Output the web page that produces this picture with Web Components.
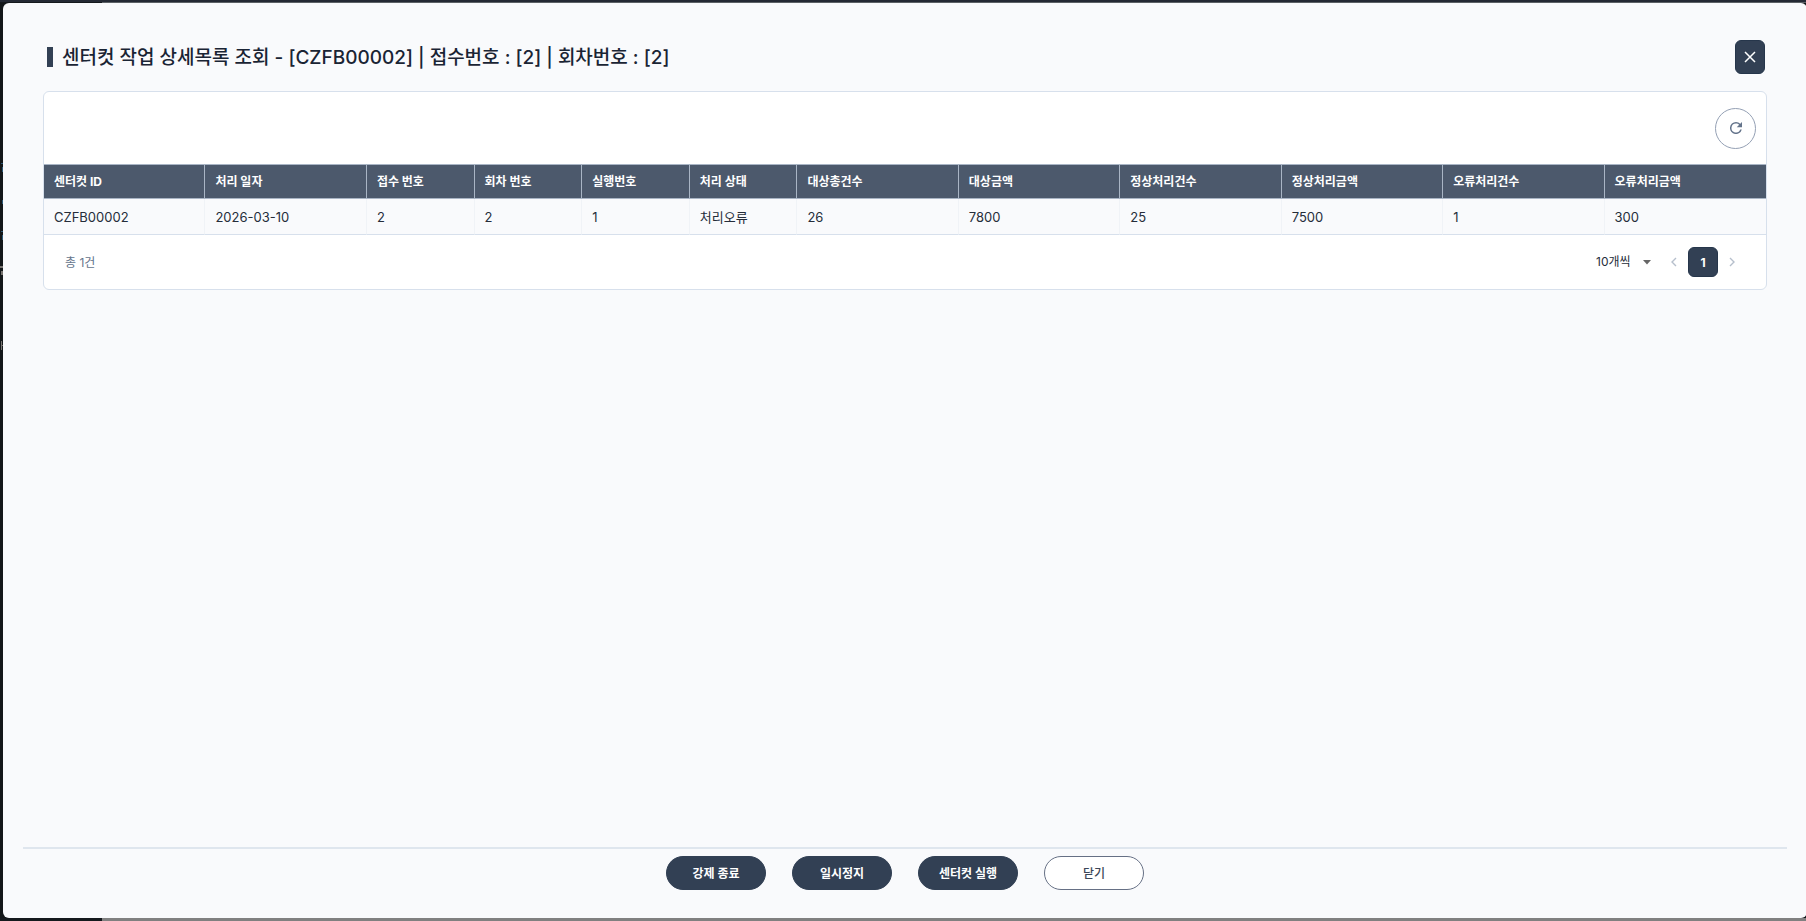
<!DOCTYPE html>
<html lang="ko">
<head>
<meta charset="utf-8">
<title>센터컷 작업 상세목록 조회</title>
<style>
html,body{height:100%;margin:0}
body{overflow:hidden;font-family:Inter,"Noto Sans CJK KR",sans-serif;font-size:12px;color:#1f2937;
  --navy:#324054;--line:#d7e0ec;--surface:#f9fafc}
</style>
</head>
<body>
<job-dialog></job-dialog>
<script>
const define=(name,html,setup)=>customElements.define(name,class extends HTMLElement{
  constructor(){super();const t=document.createElement('template');t.innerHTML=html;
    this.attachShadow({mode:'open'}).append(t.content.cloneNode(true));if(setup)setup(this,this.shadowRoot);}
});

define('pill-button',`<style>
:host{display:block}
button{box-sizing:border-box;width:100px;height:34px;padding:0 0 2px;border:1px solid var(--navy);border-radius:17px;background:var(--navy);color:#fff;font:inherit;font-size:12px;font-weight:700}
:host([outline]) button{background:#fff;border-color:#667085;color:#3a4658;font-weight:500}
</style><button type="button"><slot></slot></button>`);

define('icon-button',`<style>
:host{display:block}
button{display:flex;align-items:center;justify-content:center;box-sizing:border-box;padding:0;font:inherit}
:host([kind=close]) button{width:30px;height:34px;border:1px solid #26364b;border-radius:6px;background:var(--navy);color:#fff}
:host([kind=refresh]) button{width:41px;height:41px;border:1px solid #94a0b4;border-radius:50%;background:#fff;color:#64748b}
:host([kind=step]) button{width:20px;height:30px;border:0;background:none;color:#b6bfcc}
</style><button type="button"><slot></slot></button>`,(host,root)=>{
  root.querySelector('button').setAttribute('aria-label',({close:'닫기',refresh:'새로고침'})[host.getAttribute('kind')]||'페이지 이동');
});

define('job-title',`<style>
:host{display:flex;align-items:center;justify-content:space-between;height:34px;padding:0 2px 0 4px}
h1{display:flex;align-items:center;gap:9px;margin:0;font-size:19px;line-height:28px;font-weight:500;color:#1a2434}
h1::before{content:"";width:6px;height:20px;background:var(--navy)}
.text{padding-top:2px}
</style><h1><span class="text"><slot></slot></span></h1><slot name="action"></slot>`);

define('job-table',`<style>
:host{display:block}
table{width:100%;table-layout:fixed;border-collapse:separate;border-spacing:0}
col.s{width:6.25%}col.l{width:9.375%}
th,td{box-sizing:border-box;text-align:left;white-space:nowrap}
th{height:35px;padding:0 10px 2px;background:#4c596c;color:#fff;font-weight:700;border:solid #a9b5c5;border-width:1px 1px 1px 0}
td{height:36px;padding:0 10px;background:var(--surface);border-right:1px solid #f0f3f7;border-bottom:1px solid var(--line);color:#252d3a;font-size:13px}
th:last-child,td:last-child{border-right-width:0}
</style>
<table><colgroup><col class="l"><col class="l"><col class="s"><col class="s"><col class="s"><col class="s"><col class="l"><col class="l"><col class="l"><col class="l"><col class="l"><col class="l"></colgroup>
<thead><tr><th>센터컷 ID</th><th>처리 일자</th><th>접수 번호</th><th>회차 번호</th><th>실행번호</th><th>처리 상태</th><th>대상총건수</th><th>대상금액</th><th>정상처리건수</th><th>정상처리금액</th><th>오류처리건수</th><th>오류처리금액</th></tr></thead>
<tbody><tr><td>CZFB00002</td><td>2026-03-10</td><td>2</td><td>2</td><td>1</td><td>처리오류</td><td>26</td><td>7800</td><td>25</td><td>7500</td><td>1</td><td>300</td></tr></tbody></table>`);

define('job-pager',`<style>
:host{display:flex;align-items:center;justify-content:space-between;height:54px;padding:0 24px 0 21px}
.total{color:#64748b;padding-bottom:2px}
nav,label{display:flex;align-items:center}
label{position:relative;margin-right:12px}
select{appearance:none;border:0;background:none;width:56px;height:30px;padding:0 0 1px;font:inherit;font-size:12px;color:#252d3a}
label svg{position:absolute;right:0;pointer-events:none}
.page{width:30px;height:30px;margin:0 4px;padding:0;border:1px solid #26364b;border-radius:6px;background:var(--navy);color:#fff;font:inherit;font-weight:700}
</style>
<span class="total">총 1건</span>
<nav aria-label="페이지">
<label><select aria-label="페이지당 건수"><option>10개씩</option><option>20개씩</option></select><svg width="10" height="5" viewBox="0 0 10 5"><path d="M1 0h8L5 4.5z" fill="#666"/></svg></label>
<icon-button kind="step"><svg width="6" height="10" viewBox="0 0 6 10"><path d="M5 1 1 5l4 4" fill="none" stroke="currentColor" stroke-width="1.4"/></svg></icon-button>
<button class="page" type="button">1</button>
<icon-button kind="step"><svg width="6" height="10" viewBox="0 0 6 10"><path d="m1 1 4 4-4 4" fill="none" stroke="currentColor" stroke-width="1.4"/></svg></icon-button>
</nav>`);

define('job-card',`<style>
:host{display:block;border:1px solid var(--line);border-radius:6px;background:#fff;overflow:hidden}
.tools{display:flex;align-items:center;justify-content:flex-end;height:72px;padding-right:10px}
</style><div class="tools"><icon-button kind="refresh"><svg width="12" height="12" viewBox="4 4 16 16"><path fill="currentColor" d="M17.65 6.35A7.96 7.96 0 0 0 12 4a8 8 0 1 0 7.73 10h-2.08A6 6 0 1 1 12 6c1.66 0 3.14.69 4.22 1.78L13 11h7V4z"/></svg></icon-button></div><slot></slot>`);

define('job-dialog',`<style>
:host{display:flex;box-sizing:border-box;height:100%;margin-right:-1px;padding:3px 0 3px 3px;
  --blue:linear-gradient(#2c5876,#2c5876);--grey:linear-gradient(#77736f,#77736f);
  background:var(--blue) 1px 163px/2px 1px no-repeat,var(--blue) 2px 167px/1px 5px no-repeat,
    var(--blue) 2px 200px/1px 4px no-repeat,
    var(--blue) 1px 231px/2px 1px no-repeat,var(--blue) 2px 235px/1px 5px no-repeat,
    var(--grey) 0 266px/3px 2px no-repeat,var(--grey) 1px 271px/2px 4px no-repeat,
    var(--grey) 1px 341px/1px 9px no-repeat,var(--grey) 1px 345px/2px 1px no-repeat,
    linear-gradient(#15191d,#15191d) 0 100%/102px 3px no-repeat,
    linear-gradient(#808080,#808080) 0 100%/100% 3px no-repeat,
    linear-gradient(#15191d,#15191d) 0 2px/102px 1px no-repeat,
    linear-gradient(#5c6166,#5c6166) 0 2px/100% 1px no-repeat,
    linear-gradient(#242934,#242934) 0 0/100% 2px no-repeat,#131719}
section{flex:1;display:flex;flex-direction:column;box-sizing:border-box;border-radius:6px;background:var(--surface);padding:37px 20px 28px}
main{flex:1;padding:0 20px}
job-card{margin-top:17px}
footer{display:flex;justify-content:center;gap:26px;padding-top:7px;border-top:2px solid #dfe6ee}
</style>
<section role="dialog">
<main><job-title>센터컷 작업 상세목록 조회 - [CZFB00002] | 접수번호 : [2] | 회차번호 : [2]<icon-button slot="action" kind="close"><svg width="12" height="12" viewBox="0 0 12 12"><path d="m1 1 10 10M11 1 1 11" stroke="currentColor" stroke-width="1.5"/></svg></icon-button></job-title>
<job-card><job-table></job-table><job-pager></job-pager></job-card></main>
<footer><pill-button>강제 종료</pill-button><pill-button>일시정지</pill-button><pill-button>센터컷 실행</pill-button><pill-button outline>닫기</pill-button></footer>
</section>`);
</script>
</body>
</html>
